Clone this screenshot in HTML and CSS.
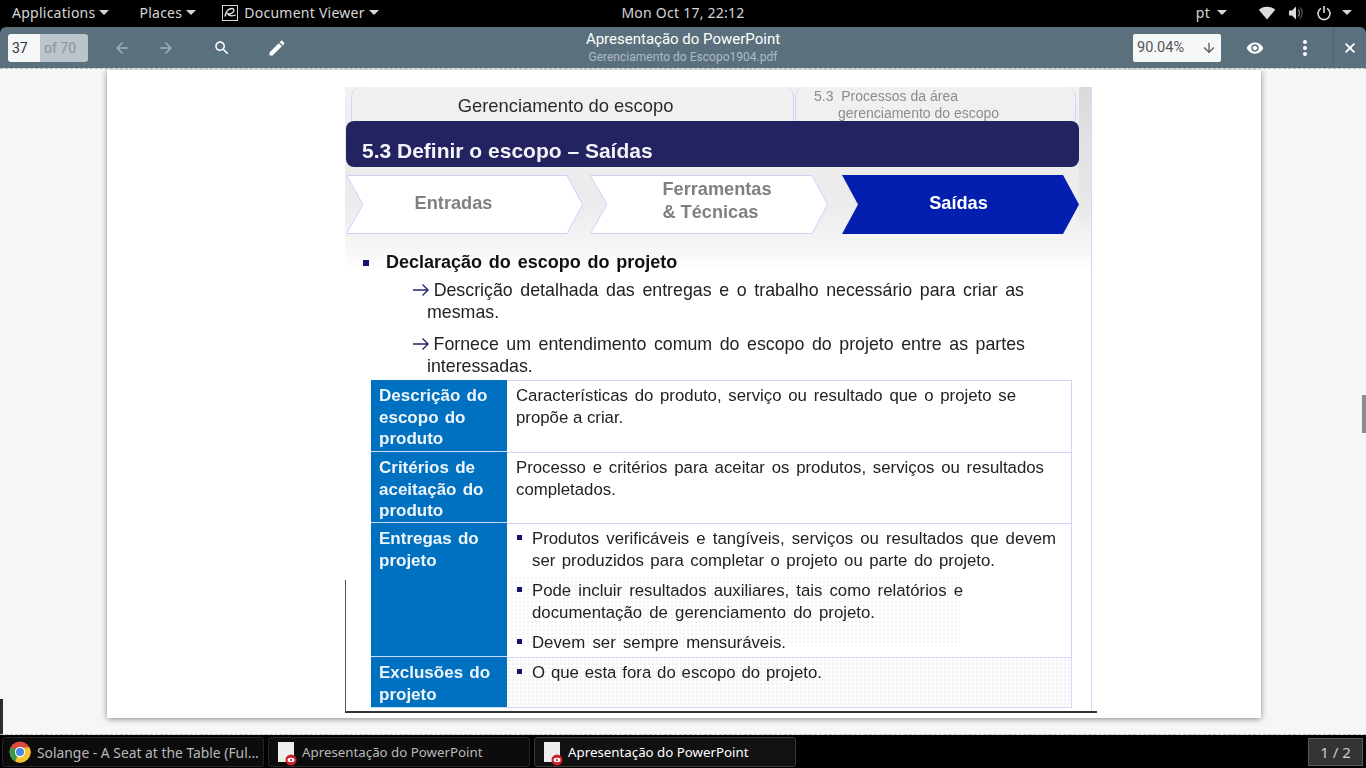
FILE: index.html
```html
<!doctype html>
<html>
  <head>
    <meta name="viewport" content="width=device-width,initial-scale=1.0" />
    <title>Document Viewer</title>
    <link rel="stylesheet" href="styles.css">
  </head>
  <body>
    <header class="topbar">
      <div class="topbar-left">
        <span class="menu menu-apps">Applications<i class="caret"></i></span>
        <span class="menu menu-places">Places<i class="caret"></i></span>
        <span class="menu">
          <svg class="app-icon" width="16" height="16" viewBox="0 0 16 16"><rect x="0.5" y="0.5" width="15" height="15" fill="none" stroke="#d8d8d8"/><path d="M3 11.5c1-5 4-8 7-8 2 0 2.600 2.500 .8 4-1.500 1.200-3.800 1.500-5 1 .5 2.200 3.800 3 8 1.500" fill="none" stroke="#e8e8e8" stroke-width="1.300"/></svg>
          Document Viewer<i class="caret"></i>
        </span>
      </div>
      <div class="clock">Mon Oct 17, 22:12</div>
      <div class="topbar-right">
        <span class="menu menu-lang">pt<i class="caret"></i></span>
        <svg width="18" height="16" viewBox="0 0 18 16"><path d="M9 14.500L0.800 4.800C3 2.800 5.800 1.700 9 1.700s6 1.100 8.200 3.100z" fill="#dcdcdc"/></svg>
        <svg width="16" height="16" viewBox="0 0 16 16"><path d="M1 5.500h3l4-4v13l-4-4H1z" fill="#dcdcdc"/><path d="M10 4.500c2 1.500 2 5.500 0 7" fill="none" stroke="#8c8c8c" stroke-width="1.300"/><path d="M12 2.500c3 2.500 3 8.500 0 11" fill="none" stroke="#555" stroke-width="1.200"/></svg>
        <svg width="16" height="16" viewBox="0 0 16 16"><path d="M5 3.400a6 6 0 1 0 6 0" fill="none" stroke="#dcdcdc" stroke-width="1.600"/><path d="M8 1v7" stroke="#dcdcdc" stroke-width="1.600"/></svg>
        <i class="caret caret-end"></i>
      </div>
    </header>

    <div class="toolbar">
      <div class="toolbar-left">
        <div class="page-field"><span class="page-num">37</span><span class="page-total">of 70</span></div>
        <svg class="tool tool-back dim" viewBox="0 0 24 24"><path d="M20 11H7.830l5.590-5.590L12 4l-8 8 8 8 1.410-1.410L7.830 13H20v-2z"/></svg>
        <svg class="tool tool-next dim" viewBox="0 0 24 24"><path d="M12 4l-1.410 1.410L16.170 11H4v2h12.170l-5.580 5.590L12 20l8-8z"/></svg>
        <svg class="tool tool-search" viewBox="0 0 24 24"><path d="M15.500 14h-.79l-.28-.27C15.410 12.590 16 11.110 16 9.500 16 5.910 13.090 3 9.500 3S3 5.910 3 9.500 5.910 16 9.500 16c1.610 0 3.090-.59 4.230-1.570l.27.28v.79l5 4.990L20.490 19l-4.990-5zm-6 0C7.010 14 5 11.990 5 9.500S7.010 5 9.500 5 14 7.010 14 9.500 11.990 14 9.500 14z"/></svg>
        <svg class="tool tool-edit" viewBox="0 0 24 24"><path d="M3 17.250V21h3.750L17.810 9.940l-3.750-3.750L3 17.250zM20.710 7.040c.39-.39.39-1.020 0-1.410l-2.340-2.340c-.39-.39-1.020-.39-1.410 0l-1.830 1.830 3.750 3.750 1.830-1.830z"/></svg>
      </div>
      <div class="doc-title">
        <div class="doc-name">Apresentação do PowerPoint</div>
        <div class="doc-file">Gerenciamento do Escopo1904.pdf</div>
      </div>
      <div class="toolbar-right">
        <div class="zoom-field">90.04%
          <svg width="16" height="16" viewBox="0 0 24 24"><path fill="#5b5b5b" d="M20 12l-1.410-1.410L13 16.170V4h-2v12.170l-5.580-5.590L4 12l8 8 8-8z"/></svg>
        </div>
        <svg class="tool tool-eye" viewBox="0 0 24 24"><path d="M12 4.500C7 4.500 2.730 7.610 1 12c1.730 4.390 6 7.500 11 7.500s9.270-3.110 11-7.500c-1.730-4.390-6-7.500-11-7.500zM12 17c-2.760 0-5-2.240-5-5s2.240-5 5-5 5 2.240 5 5-2.240 5-5 5zm0-8c-1.660 0-3 1.340-3 3s1.340 3 3 3 3-1.340 3-3-1.340-3-3-3z"/></svg>
        <svg class="tool tool-more" viewBox="0 0 24 24"><path d="M12 8c1.100 0 2-.9 2-2s-.9-2-2-2-2 .9-2 2 .9 2 2 2zm0 2c-1.100 0-2 .9-2 2s.9 2 2 2 2-.9 2-2-.9-2-2-2zm0 6c-1.100 0-2 .9-2 2s.9 2 2 2 2-.9 2-2-.9-2-2-2z"/></svg>
        <div class="tool-close">
          <svg width="16" height="16" viewBox="0 0 24 24"><path fill="#fff" stroke="#fff" d="M19 6.410L17.590 5 12 10.590 6.410 5 5 6.410 10.590 12 5 17.590 6.410 19 12 13.410 17.590 19 19 17.590 13.410 12z"/></svg>
        </div>
      </div>
    </div>

    <main class="viewer">
      <div class="page">
        <div class="slide">
          <div class="slide-tabs">
            <div class="slide-tab tab-main">Gerenciamento do escopo</div>
            <div class="slide-tab tab-side">
              <span>5.3&nbsp; Processos da área</span>
              <span class="tab-side-2">gerenciamento do escopo</span>
            </div>
          </div>
          <div class="slide-title">5.3 Definir o escopo – Saídas</div>

          <div class="steps">
            <div class="step step-1">
              <svg viewBox="0 0 237 59" preserveAspectRatio="none"><polygon points="0.500,0.500 221,0.500 236.500,29.500 221,58.500 0.500,58.500 17,29.500" fill="#fff" stroke="#d0d0fb"/></svg>
              <span>Entradas</span>
            </div>
            <div class="step step-2">
              <svg viewBox="0 0 238 59" preserveAspectRatio="none"><polygon points="0.500,0.500 222,0.500 237.500,29.500 222,58.500 0.500,58.500 17,29.500" fill="#fff" stroke="#d0d0fb"/></svg>
              <span>Ferramentas<br>&amp; Técnicas</span>
            </div>
            <div class="step step-3">
              <svg viewBox="0 0 237 59" preserveAspectRatio="none"><polygon points="0,0 221,0 237,29.500 221,59 0,59 16,29.500" fill="#041fb0"/></svg>
              <span>Saídas</span>
            </div>
          </div>

          <div class="lead"><i class="lead-mark"></i>Declaração do escopo do projeto</div>
          <p class="note w597">
            <span class="line">
              <svg class="note-arrow" width="18" height="14" viewBox="0 0 18 14"><path d="M1 7h15M10.500 1.500L16 7l-5.500 5.500" fill="none" stroke="#24246e" stroke-width="1.400"/></svg>
              Descrição detalhada das entregas e o trabalho necessário para criar as
            </span>
            <span class="line-end">mesmas.</span>
          </p>
          <p class="note w598">
            <span class="line">
              <svg class="note-arrow" width="18" height="14" viewBox="0 0 18 14"><path d="M1 7h15M10.500 1.500L16 7l-5.500 5.500" fill="none" stroke="#24246e" stroke-width="1.400"/></svg>
              Fornece um entendimento comum do escopo do projeto entre as partes
            </span>
            <span class="line-end">interessadas.</span>
          </p>

          <div class="spec">
            <div class="spec-head">Descrição do escopo do produto</div>
            <div class="spec-body">
              <span class="line w500">Características do produto, serviço ou resultado que o projeto se</span>
              <span class="line-end">propõe a criar.</span>
            </div>
            <div class="spec-head">Critérios de aceitação do produto</div>
            <div class="spec-body">
              <span class="line w528">Processo e critérios para aceitar os produtos, serviços ou resultados</span>
              <span class="line-end">completados.</span>
            </div>
            <div class="spec-head">Entregas do projeto</div>
            <div class="spec-body spec-list spec-noise">
              <ul>
                <li>
                  <span class="line w524">Produtos verificáveis e tangíveis, serviços ou resultados que devem</span>
                  <span class="line w463">ser produzidos para completar o projeto ou parte do projeto.</span>
                </li>
                <li>
                  <span class="line w431">Pode incluir resultados auxiliares, tais como relatórios e</span>
                  <span class="line w343">documentação de gerenciamento do projeto.</span>
                </li>
                <li><span class="line w254">Devem ser sempre mensuráveis.</span></li>
              </ul>
            </div>
            <div class="spec-head">Exclusões do projeto</div>
            <div class="spec-body spec-list spec-dots">
              <ul>
                <li><span class="line w290">O que esta fora do escopo do projeto.</span></li>
              </ul>
            </div>
          </div>
          <div class="slide-foot"></div>
        </div>
      </div>
      <div class="scroll-thumb"></div>
      <div class="edge-mark"></div>
    </main>

    <footer class="taskbar">
      <div class="task task-chrome">
        <svg width="22" height="22" viewBox="0 0 24 24">
          <circle cx="12" cy="12" r="11.500" fill="#dd4b3e"/>
          <path d="M12 12L2.200 6.500A11.500 11.500 0 0 0 7 22.400z" fill="#3a9a47"/>
          <path d="M12 7h10.400A11.500 11.500 0 0 1 7 22.400z" fill="#f6c52c"/>
          <circle cx="12" cy="12" r="5.600" fill="#fff"/>
          <circle cx="12" cy="12" r="4.400" fill="#4a85ec"/>
        </svg>
        <span>Solange - A Seat at the Table (Ful...</span>
      </div>
      <div class="task">
        <span class="doc-icon"><svg width="12" height="12" viewBox="0 0 12 12"><circle cx="6" cy="6" r="5.500" fill="#c9202c"/><ellipse cx="6" cy="6" rx="3.500" ry="2.200" fill="#fff"/><circle cx="6" cy="6" r="1.100" fill="#c9202c"/></svg></span>
        <span>Apresentação do PowerPoint</span>
      </div>
      <div class="task task-active">
        <span class="doc-icon"><svg width="12" height="12" viewBox="0 0 12 12"><circle cx="6" cy="6" r="5.500" fill="#c9202c"/><ellipse cx="6" cy="6" rx="3.500" ry="2.200" fill="#fff"/><circle cx="6" cy="6" r="1.100" fill="#c9202c"/></svg></span>
        <span>Apresentação do PowerPoint</span>
      </div>
      <div class="pager">1 / 2</div>
    </footer>
  </body>
</html>
```

FILE: styles.css
```css
html, body {
  height: 100%;
}
body {
  margin: 0;
  width: 1366px;
  height: 768px;
  overflow: hidden;
  display: flex;
  flex-direction: column;
  background: #000;
  font-family: "Noto Sans", sans-serif;
}

/* top shell bar */
.topbar {
  height: 27px;
  flex: none;
  display: grid;
  grid-template-columns: 1fr auto 1fr;
  align-items: center;
  background: #000;
  color: #d6d6d6;
  font-size: 14px;
  letter-spacing: 0.25px;
  padding: 0 12px 2px;
  box-sizing: border-box;
}
.topbar-left {
  display: flex;
  align-items: center;
}
.topbar-right {
  display: flex;
  align-items: center;
  justify-content: flex-end;
  gap: 12px;
  padding-right: 2px;
}
.menu {
  display: flex;
  align-items: center;
}
.menu-apps {
  margin-right: 30px;
}
.menu-places {
  margin-right: 26px;
}
.menu-lang {
  margin-right: 19px;
}
.menu-lang .caret {
  margin-left: 7px;
}
.app-icon {
  margin-right: 6px;
}
.caret {
  display: inline-block;
  width: 0;
  height: 0;
  margin-left: 4px;
  border-left: 5px solid transparent;
  border-right: 5px solid transparent;
  border-top: 5px solid #d6d6d6;
}
.caret-end {
  margin-left: -2px;
}
.clock {
  font-size: 14px;
}

/* pdf toolbar */
.toolbar {
  height: 41px;
  flex: none;
  display: grid;
  grid-template-columns: 1fr auto 1fr;
  align-items: center;
  background: #5a707c;
  border-radius: 6px 6px 0 0;
  font-family: Roboto, sans-serif;
}
.toolbar-left {
  display: flex;
  align-items: center;
  padding-left: 8px;
}
.toolbar-right {
  display: flex;
  align-items: center;
  justify-content: flex-end;
  height: 100%;
}
.page-field {
  display: flex;
  width: 80px;
  height: 28px;
  border-radius: 3px;
  overflow: hidden;
  line-height: 28px;
  font-size: 14px;
}
.page-num {
  width: 32px;
  padding-left: 4px;
  box-sizing: border-box;
  background: #f6f7f8;
  color: #333;
}
.page-total {
  flex: 1;
  padding-left: 4px;
  background: #bac4ca;
  color: #87939b;
}
.tool {
  width: 20px;
  height: 20px;
  fill: #fff;
}
.tool.dim {
  width: 18px;
  height: 18px;
  fill: #a0aeb6;
}
.tool-back {
  margin-left: 25px;
}
.tool-next {
  margin-left: 26px;
}
.tool-search {
  width: 18px;
  height: 18px;
  margin-left: 38px;
}
.tool-edit {
  margin-left: 36px;
}
.doc-title {
  text-align: center;
  white-space: nowrap;
  padding-top: 1px;
}
.doc-name {
  font-size: 15px;
  line-height: 17px;
  margin-top: -1px;
  color: #fff;
}
.doc-file {
  margin-top: 2px;
  font-size: 12px;
  letter-spacing: 0.02px;
  line-height: 15px;
  color: #afbcc4;
}
.zoom-field {
  display: flex;
  align-items: center;
  justify-content: space-between;
  width: 88px;
  height: 28px;
  padding: 0 4px;
  box-sizing: border-box;
  background: #f6f7f8;
  border-radius: 2px;
  font-size: 14.500px;
  color: #555;
}
.tool-eye {
  width: 18px;
  height: 18px;
  margin-left: 25px;
}
.tool-more {
  width: 24px;
  height: 24px;
  margin-left: 29px;
}
.tool-close {
  display: flex;
  align-items: center;
  justify-content: center;
  width: 32px;
  height: 100%;
  margin-left: 16px;
  border-left: 1px solid #4f646f;
}

/* document area */
.viewer {
  flex: 1;
  position: relative;
  overflow: hidden;
  background: #f6f6f6;
  border-top: 1px dashed #b8b8b8;
  border-bottom: 1px dashed #b8b8b8;
}
.page {
  width: 1154px;
  height: 648px;
  margin: 1px 0 0 107px;
  padding-top: 17px;
  box-sizing: border-box;
  background: #fff;
  box-shadow: 0 1px 6px rgba(0, 0, 0, 0.45);
}
.scroll-thumb {
  position: absolute;
  right: 0;
  top: 326px;
  width: 4px;
  height: 38px;
  background: #8d8d8d;
}
.edge-mark {
  position: absolute;
  left: 0;
  bottom: 0;
  width: 3px;
  height: 35px;
  background: #2c2c2c;
}

/* the slide inside the page */
.slide {
  position: relative;
  width: 747px;
  height: 626px;
  margin-left: 238px;
  box-sizing: border-box;
  border-right: 1px solid #d7d7fb;
  font-family: "Liberation Sans", Arial, sans-serif;
  color: #1a1a1a;
  background: linear-gradient(to bottom, #f1f1f1 0, #ececec 90px, #ececec 120px, #f6f6f6 160px, #fff 185px);
  filter: blur(0.35px);
}
.slide::before {
  content: "";
  position: absolute;
  left: 0;
  top: 493px;
  bottom: 1px;
  width: 1px;
  background: #555;
}
.slide::after {
  content: "";
  position: absolute;
  right: 0;
  top: 0;
  width: 12px;
  height: 150px;
  background: linear-gradient(to bottom, #dadada, rgba(218, 218, 218, 0));
}
.slide-tabs {
  display: flex;
  height: 34px;
  padding-left: 6px;
}
.slide-tab {
  box-sizing: border-box;
  border: 1px solid #d3d3fb;
  border-top: none;
  border-bottom: none;
  border-radius: 10px 10px 0 0;
}
.tab-main {
  width: 443px;
  padding: 8px 14px 0 0;
  text-align: center;
  font-size: 18.400px;
  color: #2b2b2b;
}
.tab-side {
  width: 281px;
  margin-left: 1px;
  padding: 1px 0 0 18px;
  font-size: 14px;
  line-height: 17px;
  color: #8c8c8c;
}
.tab-side span {
  display: block;
}
.tab-side-2 {
  margin-left: 24px;
}
.slide-title {
  width: 733px;
  height: 46px;
  margin-left: 1px;
  padding: 18px 0 0 16px;
  box-sizing: border-box;
  border-radius: 8px;
  background: #242361;
  color: #f4f4f8;
  font-size: 21px;
  font-weight: 700;
  line-height: 24px;
}
.steps {
  display: flex;
  height: 59px;
  margin: 8px 0 0 1px;
}
.step {
  display: grid;
  place-items: center;
  font-size: 18.200px;
  line-height: 22.500px;
  font-weight: 700;
  color: #808080;
}
.step svg,
.step span {
  grid-area: 1 / 1;
}
.step svg {
  width: 100%;
  height: 59px;
  display: block;
}
.step span {
  position: relative;
  text-align: left;
}
.step-1 {
  width: 237px;
}
.step-1 span {
  margin: -2px 22px 0 0;
}
.step-2 {
  width: 238px;
  margin-left: 7px;
}
.step-2 span {
  margin: -8px 0 0 16px;
}
.step-3 {
  width: 237px;
  margin-left: 14px;
  color: #fff;
}
.step-3 span {
  margin: -2px 4px 0 0;
}
.lead {
  display: flex;
  align-items: center;
  height: 21px;
  margin-top: 18px;
  padding-left: 18px;
  font-size: 18px;
  word-spacing: 1.800px;
  font-weight: 700;
  color: #111;
}
.lead-mark {
  width: 6px;
  height: 6px;
  margin-right: 17px;
  background: #14146e;
}
.note {
  margin: 6px 0 0 82px;
  font-size: 17.800px;
  line-height: 22px;
  color: #222;
}
.note + .note {
  margin-top: 10px;
}
.note-arrow {
  margin: 0 -4px 0 -15px;
  vertical-align: -1px;
}
.line {
  display: block;
  white-space: nowrap;
  text-align: justify;
  text-align-last: justify;
}
.line-end {
  display: block;
}
.w597 {
  width: 597px;
}
.w598 {
  width: 598px;
}
.w500 {
  width: 500px;
}
.w528 {
  width: 528px;
}
.w524 {
  width: 524px;
}
.w463 {
  width: 463px;
}
.w431 {
  width: 431px;
}
.w343 {
  width: 343px;
}
.w254 {
  width: 254px;
}
.w290 {
  width: 290px;
}

/* definition table */
.spec {
  display: grid;
  grid-template-columns: 136px 565px;
  grid-template-rows: 72px 71px 134px 51px;
  width: 701px;
  margin: 3px 0 0 26px;
}
.spec-head {
  padding: 5px 14px 0 8px;
  box-sizing: border-box;
  background: #0070c0;
  border-bottom: 1px solid #c9dcf5;
  color: #eef5fb;
  font-size: 17px;
  font-weight: 700;
  line-height: 21.500px;
  word-spacing: 1.500px;
}
.spec-body {
  position: relative;
  padding: 4px 0 0 9px;
  box-sizing: border-box;
  border: 1px solid #d3d3fb;
  border-left: none;
  border-bottom: none;
  font-size: 16.800px;
  line-height: 21.500px;
  color: #222;
  background: #fff;
}
.spec-list {
  padding-left: 25px;
}
.spec-list ul {
  position: relative;
  list-style: none;
  margin: 0;
  padding: 0;
}
.spec-list li {
  position: relative;
  margin-bottom: 9px;
}
.spec-list li::before {
  content: "";
  position: absolute;
  left: -15px;
  top: 7px;
  width: 5px;
  height: 5px;
  background: #14146e;
}
.spec-noise::before {
  content: "";
  position: absolute;
  left: 3px;
  top: 52px;
  width: 450px;
  height: 70px;
  opacity: 0.3;
  background-image: radial-gradient(#d8d8d8 1px, transparent 1px);
  background-size: 4px 4px;
}
.spec-dots {
  border-bottom: 1px solid #d3d3fb;
  background-color: #fdfdfd;
  background-image: radial-gradient(#f0f0f0 1px, transparent 1px);
  background-size: 4px 4px;
}
.slide-foot {
  width: 752px;
  height: 2px;
  margin-top: 3px;
  background: #333;
}

/* window list */
.taskbar {
  height: 33px;
  flex: none;
  display: flex;
  align-items: center;
  gap: 4px;
  padding: 1px 3px 0 2px;
  box-sizing: border-box;
  background: #000;
  font-size: 13.300px;
  color: #b9b9b9;
}
.task {
  display: flex;
  align-items: center;
  width: 262px;
  height: 30px;
  padding-left: 7px;
  box-sizing: border-box;
  gap: 6px;
  background: #0c0c0c;
  border: 1px solid #262626;
  border-radius: 3px;
  white-space: nowrap;
}
.task-chrome {
  padding-left: 6px;
  gap: 6px;
  font-size: 13.850px;
}
.task-active {
  color: #fff;
  background: #111;
  border-color: #3a3a3a;
}
.doc-icon {
  position: relative;
  width: 16px;
  height: 20px;
  margin: 0 2px 0 2px;
  background: #eee;
}
.doc-icon svg {
  position: absolute;
  right: -3px;
  bottom: -4px;
}
.pager {
  width: 55px;
  height: 28px;
  margin-left: auto;
  box-sizing: border-box;
  border: 1px solid #5a5a5a;
  background: #333;
  color: #ccc;
  text-align: center;
  line-height: 26px;
  font-size: 15px;
}
```
